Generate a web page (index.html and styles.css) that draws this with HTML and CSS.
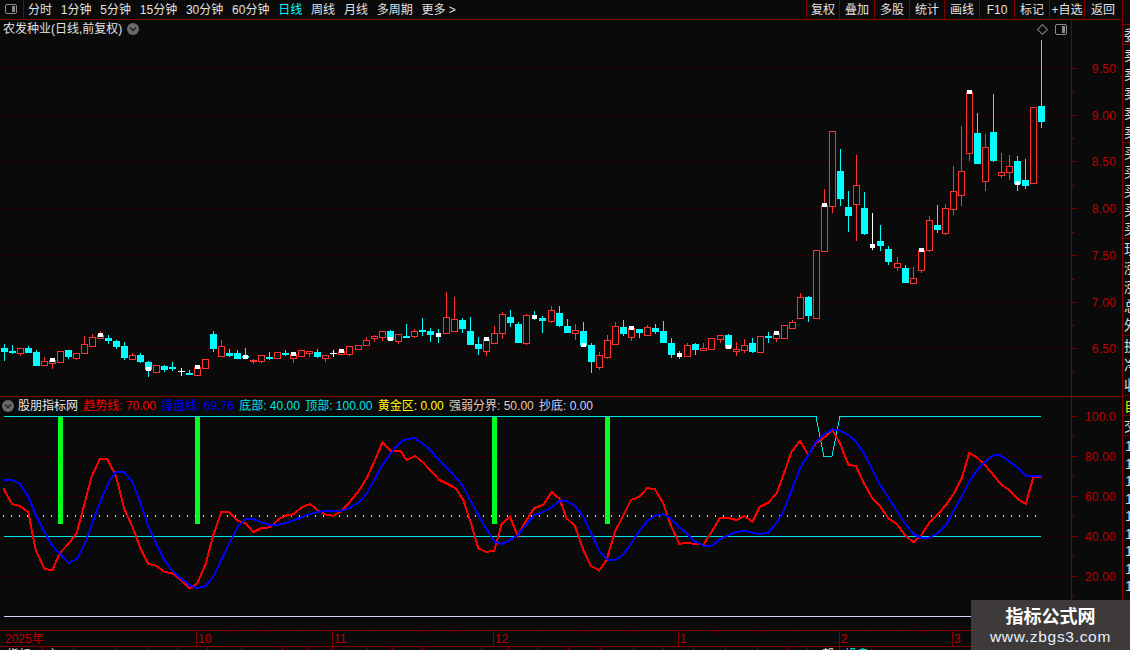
FILE: index.html
```html
<!DOCTYPE html>
<html lang="zh-CN">
<head>
<meta charset="utf-8">
<title>农发种业</title>
<link rel="stylesheet" href="styles.css">
</head>
<body>
<div class="app">
  <header class="toolbar">
    <div class="layout-btn">
      <svg class="panel-icon" viewBox="0 0 12 10" width="12" height="10"><rect x=".5" y=".5" width="11" height="9" rx="1.5" class="panel-frame"/><rect x="7" y="2" width="3" height="6" class="panel-fill"/></svg>
    </div>
    <nav class="periods">
      <span>分时</span><span>1分钟</span><span>5分钟</span><span>15分钟</span><span>30分钟</span><span>60分钟</span><span class="active">日线</span><span>周线</span><span>月线</span><span>多周期</span><span>更多 &gt;</span>
    </nav>
    <nav class="tools">
      <span>复权</span><span>叠加</span><span>多股</span><span>统计</span><span>画线</span><span>F10</span><span>标记</span><span>+自选</span><span class="back">返回</span>
    </nav>
  </header>

  <div class="workspace">
    <main class="charts">
      <section class="panel price-panel">
        <div class="price-title">
          <span>农发种业(日线,前复权)</span>
          <svg class="chev" viewBox="0 0 12 12" width="12" height="12"><circle cx="6" cy="6" r="6" class="chev-bg"/><path d="M3 4.5 6 7.5 9 4.5" class="chev-mark"/></svg>
        </div>
        <div class="price-tools">
          <svg viewBox="0 0 10 10" width="11" height="11"><path d="M5 .5 9.5 5 5 9.5 .5 5z" class="diamond"/></svg>
          <svg viewBox="0 0 12 11" width="12" height="11"><rect x=".5" y=".5" width="11" height="10" rx="1.5" class="panel-frame"/><rect x="7" y="2" width="3" height="7" class="panel-fill"/></svg>
        </div>
        <svg class="plot" viewBox="0 20 1122 376" width="1122" height="376">
          <path class="grid" d="M0 68.5H1071M0 115.5H1071M0 161.5H1071M0 208.5H1071M0 255.5H1071M0 302.5H1071M0 348.5H1071"/>
          <path class="axis" d="M1071.5 20V396M1071 68.5h6M1071 115.5h6M1071 161.5h6M1071 208.5h6M1071 255.5h6M1071 302.5h6M1071 348.5h6M1071 92.5h3M1071 138.5h3M1071 185.5h3M1071 232.5h3M1071 279.5h3M1071 325.5h3M1071 372.5h3"/>
          <g class="scale">
            <text x="1116" y="73">9.50</text><text x="1116" y="120">9.00</text><text x="1116" y="166">8.50</text><text x="1116" y="213">8.00</text><text x="1116" y="260">7.50</text><text x="1116" y="307">7.00</text><text x="1116" y="353">6.50</text>
          </g>
          <path class="wick-red" d="M20.5 353V356M44.5 357V366M52.5 358V369M76.5 353V360M84.5 336V353M92.5 334V346M100.5 331V338M132.5 353V359M156.5 372V373M205.5 368V369M221.5 340V356M253.5 359V364M261.5 361V363M293.5 358V363M301.5 356V357M309.5 351V357M325.5 358V362M341.5 354V355M349.5 354V356M358.5 349V350M366.5 337V345M374.5 335V342M382.5 337V341M398.5 341V344M414.5 329V338M446.5 292V317M454.5 297V319M486.5 351V356M494.5 326V344M502.5 312V339M526.5 314V345M551.5 306V323M575.5 324V340M599.5 352V370M607.5 335V359M615.5 322V344M631.5 337V341M647.5 325V336M687.5 343V357M703.5 343V351M720.5 339V343M736.5 342V356M744.5 339V353M776.5 338V342M792.5 320V328M800.5 293V318M824.5 189V251M832.5 206V213M856.5 155V241M897.5 257V271M913.5 267V283M921.5 270V273M929.5 216V252M945.5 204V235M953.5 166V215M961.5 126V206M969.5 153V161M985.5 134V191M1001.5 153V178M1009.5 155V180"/>
          <path class="body-red" d="M17.5 348.5h6V353.5h-6zM41.5 361.5h6V365.5h-6zM49.5 360.5h6V363.5h-6zM57.5 351.5h6V362.5h-6zM73.5 353.5h6V358.5h-6zM81.5 344.5h6V353.5h-6zM89.5 337.5h6V346.5h-6zM97.5 335.5h6V338.5h-6zM129.5 355.5h6V359.5h-6zM153.5 365.5h6V372.5h-6zM194.5 367.5h6V375.5h-6zM202.5 359.5h6V368.5h-6zM218.5 346.5h6V356.5h-6zM250.5 360.5h6V361.5h-6zM258.5 355.5h6V361.5h-6zM274.5 352.5h6V358.5h-6zM290.5 354.5h6V358.5h-6zM298.5 350.5h6V356.5h-6zM306.5 351.5h6V353.5h-6zM322.5 355.5h6V358.5h-6zM338.5 351.5h6V354.5h-6zM346.5 346.5h6V354.5h-6zM355.5 345.5h6V349.5h-6zM363.5 340.5h6V345.5h-6zM371.5 336.5h6V338.5h-6zM379.5 331.5h6V337.5h-6zM395.5 334.5h6V341.5h-6zM411.5 331.5h6V336.5h-6zM443.5 317.5h6V333.5h-6zM451.5 319.5h6V331.5h-6zM483.5 339.5h6V351.5h-6zM491.5 333.5h6V343.5h-6zM499.5 314.5h6V333.5h-6zM523.5 315.5h6V343.5h-6zM548.5 310.5h6V321.5h-6zM572.5 330.5h6V333.5h-6zM596.5 355.5h6V367.5h-6zM604.5 340.5h6V357.5h-6zM612.5 326.5h6V344.5h-6zM628.5 328.5h6V337.5h-6zM644.5 327.5h6V335.5h-6zM684.5 345.5h6V356.5h-6zM700.5 348.5h6V350.5h-6zM708.5 338.5h6V349.5h-6zM717.5 335.5h6V339.5h-6zM733.5 349.5h6V351.5h-6zM741.5 345.5h6V350.5h-6zM757.5 336.5h6V352.5h-6zM773.5 333.5h6V338.5h-6zM781.5 325.5h6V338.5h-6zM789.5 322.5h6V328.5h-6zM797.5 297.5h6V318.5h-6zM813.5 250.5h6V318.5h-6zM821.5 205.5h6V251.5h-6zM829.5 131.5h6V206.5h-6zM853.5 185.5h6V204.5h-6zM894.5 263.5h6V267.5h-6zM910.5 278.5h6V283.5h-6zM918.5 250.5h6V270.5h-6zM926.5 220.5h6V250.5h-6zM942.5 208.5h6V233.5h-6zM950.5 191.5h6V209.5h-6zM958.5 171.5h6V195.5h-6zM966.5 92.5h6V153.5h-6zM982.5 147.5h6V181.5h-6zM998.5 172.5h6V175.5h-6zM1006.5 166.5h6V172.5h-6zM1030.5 107.5h6V183.5h-6z"/>
          <path class="wick-cyan" d="M4.5 344V361M12.5 345V354M28.5 346V353M36.5 350V366M68.5 350V359M108.5 335V344M116.5 340V349M124.5 342V360M140.5 353V363M148.5 361V377M164.5 365V372M172.5 362V371M189.5 370V374M213.5 331V352M229.5 349V357M237.5 350V359M245.5 348V359M269.5 352V360M285.5 350V356M317.5 349V358M390.5 330V340M406.5 324V338M422.5 318V336M430.5 328V342M438.5 329V343M462.5 318V333M470.5 317V344M478.5 337V355M510.5 310V327M518.5 322V343M534.5 311V320M542.5 316V333M559.5 306V327M567.5 319V333M583.5 322V347M591.5 343V373M623.5 320V336M639.5 329V338M655.5 324V334M663.5 321V343M671.5 338V358M679.5 351V359M695.5 343V355M728.5 334V349M752.5 338V353M768.5 332V343M808.5 296V322M840.5 149V206M848.5 191V232M864.5 192V235M880.5 225V251M888.5 246V265M905.5 265V282M937.5 205V233M977.5 113V164M993.5 94V162M1017.5 156V191M1025.5 159V189M1041.5 40V128"/>
          <path class="body-cyan" d="M1.5 348.5h6V351.5h-6zM9.5 351.5h6V352.5h-6zM25.5 348.5h6V352.5h-6zM33.5 352.5h6V365.5h-6zM65.5 350.5h6V356.5h-6zM105.5 338.5h6V340.5h-6zM113.5 341.5h6V346.5h-6zM121.5 346.5h6V357.5h-6zM137.5 355.5h6V361.5h-6zM145.5 362.5h6V369.5h-6zM161.5 366.5h6V369.5h-6zM169.5 367.5h6V368.5h-6zM186.5 373.5h6V374.5h-6zM210.5 334.5h6V348.5h-6zM226.5 353.5h6V355.5h-6zM234.5 353.5h6V358.5h-6zM242.5 356.5h6V357.5h-6zM266.5 357.5h6V358.5h-6zM282.5 353.5h6V354.5h-6zM314.5 352.5h6V356.5h-6zM387.5 331.5h6V339.5h-6zM403.5 336.5h6V337.5h-6zM419.5 330.5h6V331.5h-6zM427.5 331.5h6V334.5h-6zM459.5 320.5h6V328.5h-6zM467.5 331.5h6V344.5h-6zM475.5 344.5h6V348.5h-6zM507.5 317.5h6V322.5h-6zM515.5 324.5h6V342.5h-6zM539.5 318.5h6V320.5h-6zM556.5 313.5h6V325.5h-6zM564.5 326.5h6V332.5h-6zM580.5 331.5h6V345.5h-6zM588.5 345.5h6V361.5h-6zM620.5 327.5h6V333.5h-6zM636.5 329.5h6V332.5h-6zM652.5 328.5h6V331.5h-6zM660.5 331.5h6V342.5h-6zM668.5 343.5h6V354.5h-6zM692.5 344.5h6V349.5h-6zM725.5 335.5h6V347.5h-6zM749.5 343.5h6V351.5h-6zM765.5 336.5h6V337.5h-6zM805.5 297.5h6V315.5h-6zM837.5 171.5h6V198.5h-6zM845.5 207.5h6V215.5h-6zM861.5 208.5h6V233.5h-6zM877.5 241.5h6V245.5h-6zM885.5 249.5h6V261.5h-6zM902.5 268.5h6V282.5h-6zM934.5 225.5h6V229.5h-6zM974.5 133.5h6V163.5h-6zM990.5 132.5h6V160.5h-6zM1014.5 161.5h6V183.5h-6zM1022.5 180.5h6V185.5h-6zM1038.5 106.5h6V121.5h-6z"/>
          <path class="wick-white" d="M181.5 368V376M178 371.5h7M333.5 350V357M330 353.5h7M872.5 213V250"/>
          <path class="doji-white" d="M50 358h5v4h-5zM98 333h5v4h-5zM146 367h5v4h-5zM195 365h5v4h-5zM243 355h5v4h-5zM291 352h5v4h-5zM339 349h5v4h-5zM388 337h5v4h-5zM436 333h5v4h-5zM484 337h5v4h-5zM532 315h5v4h-5zM581 343h5v4h-5zM629 326h5v4h-5zM677 353h5v4h-5zM726 345h5v4h-5zM774 331h5v4h-5zM822 203h5v4h-5zM870 244h5v4h-5zM919 248h5v4h-5zM967 90h5v4h-5zM1015 181h5v4h-5z"/>
        </svg>
      </section>

      <section class="panel indicator-panel">
        <div class="legend">
          <svg class="chev" viewBox="0 0 12 12" width="12" height="12"><circle cx="6" cy="6" r="6" class="chev-bg"/><path d="M3 4.5 6 7.5 9 4.5" class="chev-mark"/></svg>
          <span class="l-name">股朋指标网</span>
          <span class="l-red">趋势线: 70.00</span>
          <span class="l-blue">操盘线: 69.76</span>
          <span class="l-cyan">底部: 40.00</span>
          <span class="l-cyan">顶部: 100.00</span>
          <span class="l-yellow">黄金区: 0.00</span>
          <span class="l-tan">强弱分界: 50.00</span>
          <span class="l-lilac">抄底: 0.00</span>
        </div>
        <svg class="plot" viewBox="0 397 1122 233" width="1122" height="233">
          <path class="grid" d="M0 456.5H1071M0 496.5H1071M0 536.5H1071M0 576.5H1071"/>
          <path class="axis" d="M1071.5 397V630M1071 416.5h6M1071 456.5h6M1071 496.5h6M1071 536.5h6M1071 576.5h6M1071 436.5h3M1071 476.5h3M1071 516.5h3M1071 556.5h3M1071 596.5h3"/>
          <g class="scale">
            <text x="1116" y="421">100.0</text><text x="1116" y="461">80.00</text><text x="1116" y="501">60.00</text><text x="1116" y="541">40.00</text><text x="1116" y="581">20.00</text>
          </g>
          <path class="signal" d="M58 417h5v107h-5zM195 417h5v107h-5zM492 417h5v107h-5zM605 417h5v107h-5z"/>
          <path class="dots" d="M3 516H1041"/>
          <path class="level" d="M4 416.5H816L824 456.5H832L840 416.5H1041M4 536.5H1041"/>
          <path class="floor" d="M4 616.5H1000"/>
          <g transform="translate(0 400) scale(.33333)">
            <polyline class="trend" points="10,265 36,312 60,318 85,337 107,450 133,506 157,511 180,458 205,432 230,400 275,230 300,176 322,178 348,228 372,325 397,380 422,447 445,492 468,497 493,515 517,520 543,540 568,565 592,550 617,492 640,405 664,336 688,336 713,362 737,370 760,396 785,384 810,382 835,358 860,346 880,343 905,322 930,312 955,332 975,343 1000,348 1025,332 1050,305 1078,270 1100,235 1125,180 1147,128 1172,152 1200,152 1220,180 1245,168 1270,188 1295,215 1318,240 1343,252 1367,265 1390,300 1413,370 1435,445 1458,456 1483,452 1505,372 1530,350 1553,408 1578,362 1603,324 1630,314 1655,276 1678,296 1700,355 1725,378 1750,450 1773,498 1798,511 1820,480 1845,395 1868,350 1893,300 1918,290 1942,264 1965,268 1990,310 2012,375 2038,432 2060,428 2085,432 2110,434 2135,395 2160,354 2185,354 2210,360 2233,348 2257,365 2280,320 2305,308 2330,280 2350,225 2375,155 2400,122 2425,165 2448,130 2473,112 2497,90 2520,130 2545,194 2568,198 2592,250 2615,292 2640,318 2665,355 2690,372 2715,405 2740,427 2763,407 2788,368 2815,342 2840,312 2865,275 2885,235 2908,158 2930,172 2955,195 2980,225 3005,255 3030,272 3055,298 3077,312 3100,232 3125,230"/>
            <polyline class="track" points="12,240 36,240 60,252 85,290 107,345 130,390 155,435 180,462 205,489 230,478 255,430 280,360 305,295 330,240 348,216 372,216 397,245 422,310 445,380 468,430 493,480 517,513 543,535 568,555 592,565 617,558 640,530 664,480 688,430 713,380 737,357 760,357 785,367 810,375 835,375 860,368 905,352 930,342 955,336 975,333 1000,332 1025,332 1050,323 1078,306 1100,280 1125,235 1147,195 1172,160 1200,128 1220,116 1245,115 1270,132 1295,155 1318,182 1343,205 1367,232 1390,260 1413,305 1435,345 1458,385 1483,425 1505,432 1530,420 1553,405 1578,375 1603,345 1630,336 1655,322 1678,302 1700,303 1725,318 1750,350 1773,400 1798,452 1820,478 1845,481 1868,465 1893,432 1918,392 1942,363 1965,347 1990,343 2012,355 2038,382 2060,400 2085,425 2110,437 2135,437 2160,418 2185,405 2210,396 2233,392 2257,398 2280,402 2305,398 2330,368 2350,335 2375,270 2400,205 2425,165 2448,125 2473,102 2497,88 2520,92 2545,105 2568,125 2592,160 2615,205 2640,255 2665,292 2690,332 2715,370 2740,402 2763,413 2788,413 2815,398 2840,372 2865,325 2885,290 2908,245 2930,212 2955,185 2980,166 3000,165 3030,186 3055,205 3077,228 3100,228 3125,228"/>
          </g>
        </svg>
      </section>

      <section class="time-panel">
        <svg class="plot" viewBox="0 630 1122 20" width="1122" height="20">
          <path class="axis" d="M0 630.5H1122M0 646.5H1122M196.5 631V646M332.5 631V646M493.5 631V646M678.5 631V646M839.5 631V646M952.5 631V646M230.5 631v2M264.5 631v2M297.5 631v2M369.5 631v2M422.5 631v2M454.5 631v2M539.5 631v2M586.5 631v2M632.5 631v2M718.5 631v2M760.5 631v2M799.5 631v2M867.5 631v2M897.5 631v2M924.5 631v2M42.5 647v3M73.5 647v3M115.5 647v3M147.5 647v3M177.5 647v3M207.5 647v3M241.5 647v3M282.5 647v3M308.5 647v3M332.5 647v3M367.5 647v3M392.5 647v3M422.5 647v3M481.5 647v3M508.5 647v3M537.5 647v3M568.5 647v3M600.5 647v3M633.5 647v3M663.5 647v3M693.5 647v3M725.5 647v3M757.5 647v3M788.5 647v3M807.5 647v3M839.5 647v3M871.5 647v3"/>
          <g class="dates">
            <text x="5" y="643">2025年</text><text x="198" y="643">10</text><text x="334" y="643">11</text><text x="495" y="643">12</text><text x="680" y="643">1</text><text x="841" y="643">2</text><text x="954" y="643">3</text>
          </g>
          <g class="tabs">
            <text x="7" y="659">指标</text><text x="47" y="659">主</text><text x="822" y="659">帮</text><text class="tab-on" x="845" y="659">操盘</text>
          </g>
        </svg>
      </section>
    </main>

    <aside class="side">
      <div class="side-cell s-top"></div>
      <div class="side-cell s-one"><span>委</span></div>
      <div class="side-cell s-five"><span>卖</span><span>卖</span><span>卖</span><span>卖</span><span>卖</span></div>
      <div class="side-cell s-five s-b"><span>买</span><span>买</span><span>买</span><span>买</span><span>买</span></div>
      <div class="side-cell s-five s-c"><span>现</span><span>涨</span><span>涨</span><span>总</span><span>外</span></div>
      <div class="side-cell s-three"><span>换</span><span>净</span><span>收</span></div>
      <div class="side-cell s-one s-yellow"><span>自</span></div>
      <div class="side-cell s-one"><span>交</span></div>
      <div class="side-list"><span>1</span><span>1</span><span>1</span><span>1</span><span>1</span><span>1</span><span>1</span><span>1</span><span>1</span></div>
    </aside>
  </div>

  <aside class="watermark">
    <strong>指标公式网</strong>
    <span>www.zbgs3.com</span>
  </aside>
</div>
</body>
</html>
```

FILE: styles.css
```css
* { box-sizing: border-box; }
html, body { margin: 0; height: 100%; overflow: hidden; background: #0a0a0a; }
body {
  font: 12px/1 "Liberation Sans", "Noto Sans CJK SC", sans-serif;
  color: #e2e2e2;
}
.app { position: relative; width: 1130px; height: 650px; overflow: hidden; }

/* toolbar */
.toolbar {
  display: flex;
  height: 20px;
  border-bottom: 1px solid #800000;
  align-items: stretch;
}
.layout-btn {
  width: 24px;
  padding: 4px 0 0 5px;
  border-right: 1px solid #800000;
}
.panel-icon { display: block; }
.panel-frame { fill: none; stroke: #8c8c8c; }
.panel-fill { fill: #8c8c8c; }
.periods { display: flex; gap: 8.8px; padding-left: 4px; align-items: center; flex: 1; }
.periods .active { color: #00ffff; }
.tools { display: flex; }
.tools span {
  width: 35px;
  border-left: 1px solid #800000;
  display: flex;
  align-items: center;
  justify-content: center;
}
.tools span:first-child { width: 33px; }
.tools .back { width: 46px; padding-right: 8px; border-right: 1px solid #800000; }

/* layout */
.workspace { display: flex; height: 630px; }
.charts { width: 1122px; flex: none; }
.panel { position: relative; border-bottom: 1px solid #800000; }
.price-panel { height: 377px; }
.indicator-panel { height: 233px; border-bottom: 0; }
.time-panel { height: 20px; }
.plot { display: block; shape-rendering: crispEdges; }

.price-title {
  position: absolute;
  left: 3px;
  top: 3px;
  display: flex;
  align-items: center;
  gap: 5px;
  height: 12px;
}
.price-tools {
  position: absolute;
  left: 1037px;
  top: 4px;
  display: flex;
  gap: 7px;
  align-items: center;
}
.diamond { fill: none; stroke: #777; stroke-width: 1; shape-rendering: auto; }
.chev { flex: none; }
.chev-bg { fill: #6a6a6a; shape-rendering: auto; }
.chev-mark { fill: none; stroke: #1e1e1e; stroke-width: 1.4; shape-rendering: auto; }

.legend {
  position: absolute;
  left: 2px;
  top: 2px;
  display: flex;
  gap: 5.25px;
  align-items: center;
  white-space: nowrap;
  height: 14px;
}
.legend .chev { margin-right: -1.25px; }
.l-name { color: #e8e8e8; }
.l-red { color: #ff0000; }
.l-blue { color: #0000ff; }
.l-cyan { color: #00e6e6; }
.l-yellow { color: #ffff00; }
.l-tan { color: #e6c8b4; }
.l-lilac { color: #d2d2ff; }

/* chart strokes */
.grid { stroke: #520000; stroke-width: 1; stroke-dasharray: 1 3; fill: none; }
.axis { stroke: #800000; stroke-width: 1; fill: none; }
.scale text { fill: #c00000; font-size: 12px; text-anchor: end; letter-spacing: .2px; }
.wick-red { stroke: #ff3232; fill: none; }
.body-red { stroke: #ff3232; fill: #0a0a0a; }
.wick-cyan { stroke: #00ffff; fill: none; }
.body-cyan { stroke: #00ffff; fill: #00ffff; }
.wick-white { stroke: #fff; fill: none; }
.doji-white { fill: #fff; }
.signal { fill: #00ff1e; }
.dots { stroke: #e8d2bc; stroke-width: 2; stroke-dasharray: 1 7; fill: none; }
.level { stroke: #00e6e6; fill: none; }
.floor { stroke: #d2d2ff; fill: none; }
.trend { stroke: #ff0000; stroke-width: 6; fill: none; }
.track { stroke: #0000ff; stroke-width: 6; fill: none; }
.dates text { fill: #c00000; font-size: 12px; }
.tabs text { fill: #e2e2e2; font-size: 12px; }
.tabs .tab-on { fill: #00ffff; }

/* right cut-off column */
.side {
  width: 8px;
  flex: none;
  margin-top: -20px;
  height: 650px;
  background: #0a0a0a;
  border-left: 1px solid #800000;
  display: flex;
  flex-direction: column;
  overflow: hidden;
  font-size: 14px;
  color: #dcdcdc;
}
.side-cell {
  display: flex;
  flex-direction: column;
  justify-content: space-around;
  border-bottom: 1px solid #800000;
  padding-left: 1px;
  overflow: hidden;
  white-space: nowrap;
  flex: none;
}
.side-cell span, .side-list span { display: block; width: 14px; }
.s-top { height: 25px; }
.s-one { height: 20px; }
.s-five { height: 98px; }
.s-five.s-b { height: 96px; }
.s-five.s-c { height: 97px; }
.s-three { height: 60px; }
.s-yellow { color: #e6e600; }
.side-list {
  display: flex;
  flex-direction: column;
  gap: 3.5px;
  padding: 3px 0 0 2px;
}
.watermark {
  position: absolute;
  left: 971px;
  top: 600px;
  width: 159px;
  height: 50px;
  background: #3e3a3a;
  display: flex;
  flex-direction: column;
  align-items: center;
  gap: 5px;
  padding-top: 6px;
  color: #fff;
}
.watermark strong { font-size: 18px; font-family: "Noto Sans CJK SC", sans-serif; line-height: 18px; }
.watermark span { font-size: 15.5px; color: #e8f0ff; font-family: "Liberation Sans", sans-serif; letter-spacing: .7px; }
```
